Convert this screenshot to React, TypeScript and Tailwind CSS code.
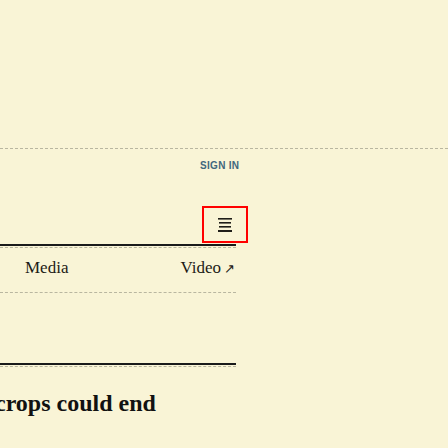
import React from 'react';

const Dashed: React.FC<{ className?: string }> = ({ className }) => (
    <div className={`border-t border-dashed border-[#b9b6a0] ${className ?? ''}`} />
);

const MenuIcon: React.FC = () => (
    <svg width="14" height="14" viewBox="0 0 14 14" className="text-[#1f1d18]">
        <rect x="0" y="0" width="14" height="1.6" fill="currentColor" />
        <rect x="1" y="4" width="12" height="1.6" fill="currentColor" />
        <rect x="1" y="8" width="12" height="1.6" fill="currentColor" />
        <rect x="0" y="12" width="14" height="2" fill="currentColor" />
    </svg>
);

const App: React.FC = () => {
    return (
        <div className="w-[448px] h-[448px] overflow-hidden bg-[#f9f4d6] font-['Liberation_Serif',serif]">
            <div className="pt-[148px]">
                <Dashed />
                <div className="mt-[11px] pl-[200px] text-[10px] font-bold tracking-[0.03em] text-[#41677d] font-['Liberation_Sans',sans-serif] leading-[11px]">
                    SIGN IN
                </div>
                <div className="mt-[35px] ml-[202px] w-[46px] h-[37px] border-2 border-[#ff0000] flex items-center justify-center">
                    <MenuIcon />
                </div>
                <div className="w-[236px]">
                    <div className="mt-[1px] border-t-2 border-[#1a1a1a]" />
                    <Dashed className="mt-[1px]" />
                    <div className="flex justify-between pl-[25px] pr-[1px] pt-[10px] pb-[13px] text-[17px] leading-[20px] text-[#1d1b16]">
                        <span>Media</span>
                        <span>Video<span className="text-[13px] ml-[3px]">↗</span></span>
                    </div>
                    <Dashed />
                    <div className="mt-[70px] border-t-2 border-[#1a1a1a]" />
                    <Dashed className="mt-[1px]" />
                    <div className="mt-[22px] -ml-[5px] whitespace-nowrap text-[24px] leading-[28px] font-bold text-[#111]">
                        crops could end
                    </div>
                </div>
            </div>
        </div>
    );
};

export default App;
